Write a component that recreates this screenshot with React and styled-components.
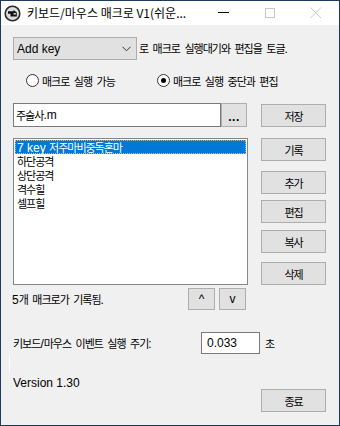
import React from "react";
import styled, { createGlobalStyle } from "styled-components";

const Global = createGlobalStyle`
  html, body { margin: 0; padding: 0; background: #f0f0f0; }
  body { font-family: "Liberation Sans", "Noto Sans CJK KR", sans-serif; font-size: 12px; color: #000; }
  * { box-sizing: border-box; }
`;

const Win = styled.div`
  width: 340px;
  height: 426px;
  border: 1px solid #1b3a5c;
  background: #f0f0f0;
  display: flex;
  flex-direction: column;
  overflow: hidden;
`;

const TitleBar = styled.div`
  height: 24px;
  background: #fff;
  display: flex;
  align-items: center;
  padding-left: 3px;
  flex-shrink: 0;
`;

const TitleText = styled.span`
  font-family: "Noto Sans CJK KR", sans-serif;
  font-size: 12px;
  letter-spacing: 0px;
  margin-left: 6px;
  flex: 1;
  white-space: nowrap;
  line-height: 24px;
`;

const Caption = styled.div`
  width: 46px;
  height: 24px;
  display: flex;
  align-items: center;
  justify-content: center;
`;

const Client = styled.div`
  flex: 1;
  display: flex;
  flex-direction: column;
  padding-left: 12px;
`;

const TopRow = styled.div`
  display: flex;
  align-items: center;
  margin-top: 12px;
  height: 23px;
`;

const Combo = styled.div`
  width: 124px;
  height: 23px;
  border: 1px solid #adadad;
  background: #e1e1e1;
  display: flex;
  align-items: center;
  padding-left: 3px;
  padding-right: 5px;
  justify-content: space-between;
`;

const Label = styled.span`
  margin-left: ${(p) => p.$ml || 0}px;
  white-space: nowrap;
`;

const Ko = styled.span`
  display: inline-block;
  height: 14px;
  line-height: 14px;
  font-family: "Noto Sans CJK KR", sans-serif;
  font-size: 11px;
  letter-spacing: -1px;
  word-spacing: 3px;
  white-space: pre;
`;

const RadioRow = styled.div`
  display: flex;
  align-items: center;
  margin-top: 14px;
  height: 13px;
  padding-left: 13px;
`;

const RadioItem = styled.label`
  display: flex;
  align-items: center;
  gap: 3px;
  width: ${(p) => p.$w}px;
`;

const RadioCircle = styled.span`
  width: 13px;
  height: 13px;
  border-radius: 50%;
  border: 1px solid #333;
  background: #fff;
  position: relative;
  flex-shrink: 0;
  &::after {
    content: "";
    display: ${(p) => (p.$on ? "block" : "none")};
    position: absolute;
    left: 3px;
    top: 3px;
    width: 5px;
    height: 5px;
    border-radius: 50%;
    background: #000;
  }
`;

const Grid = styled.div`
  display: grid;
  grid-template-columns: 235px 65px;
  column-gap: 13px;
  margin-top: ${(p) => p.$mt}px;
`;

const FileGroup = styled.div`
  display: flex;
  height: 24px;
`;

const TextBox = styled.div`
  width: 208px;
  height: 24px;
  background: #fff;
  border: 1px solid #7a7a7a;
  display: flex;
  align-items: center;
  padding-left: 2px;
`;

const Btn = styled.div`
  width: ${(p) => p.$w || 65}px;
  height: ${(p) => p.$h || 23}px;
  margin-top: ${(p) => p.$mt || 0}px;
  background: #e1e1e1;
  border: 1px solid #adadad;
  display: flex;
  align-items: center;
  justify-content: center;
  flex-shrink: 0;
`;

const Dots = styled.span`
  font-weight: bold;
  margin-top: 3px;
  letter-spacing: 0.5px;
`;

const List = styled.div`
  width: 235px;
  height: 147px;
  background: #fff;
  border: 1px solid #828790;
  padding: 1px;
`;

const Item = styled.div`
  height: 14px;
  line-height: 14px;
  padding-left: 2px;
  white-space: nowrap;
  overflow: hidden;
  background: ${(p) => (p.$sel ? "#0078d7" : "transparent")};
  color: ${(p) => (p.$sel ? "#fff" : "#000")};
  outline: ${(p) => (p.$sel ? "1px dotted #f2b46a" : "none")};
  outline-offset: -1px;
`;

const BtnCol = styled.div`
  display: flex;
  flex-direction: column;
`;

const CountRow = styled.div`
  display: flex;
  align-items: center;
  height: 22px;
  margin-top: 3px;
  width: 235px;
`;

const CountText = styled.span`
  flex: 1;
  margin-left: -1px;
`;

const ArrowGroup = styled.div`
  display: flex;
  gap: 4px;
  margin-right: 2px;
`;

const PeriodRow = styled.div`
  display: flex;
  align-items: center;
  margin-top: 22px;
  height: 22px;
`;

const PeriodLabel = styled.span`
  width: 188px;
`;

const NumBox = styled.div`
  width: 59px;
  height: 22px;
  background: #fff;
  border: 1px solid #7a7a7a;
  display: flex;
  align-items: center;
  padding-left: 5px;
  margin-right: 5px;
`;

const Stub = styled.div`
  width: 1px;
  height: 18px;
  margin-top: 1px;
  margin-left: -4px;
  background: #fff;
`;

const BottomRow = styled.div`
  display: flex;
  justify-content: space-between;
  align-items: flex-start;
  width: 313px;
`;

const Version = styled.span`
  margin-top: 3px;
  line-height: 14px;
`;

const HANGUL = /([\uAC00-\uD7A3]+(?:\s+[\uAC00-\uD7A3]+)*)/;
const T = ({ children }) =>
  String(children)
    .split(HANGUL)
    .map((p, i) => (i % 2 ? <Ko key={i}>{p}</Ko> : p));

const AppIcon = () => (
  <svg width="17" height="17" viewBox="0 0 17 17">
    <circle cx="8.5" cy="8.5" r="7.3" fill="#dcdcdc" stroke="#2a2a2a" strokeWidth="1.6" />
    <path d="M4 6.2 L9.5 6.2 L9.5 5 L12.8 7.6 L12.8 11.4 L6.5 11.4 L6.5 8.8 L4 8.8 Z" fill="#111" />
    <rect x="9.6" y="8" width="2.2" height="1.6" fill="#dcdcdc" />
  </svg>
);

const Chevron = () => (
  <svg width="9" height="6" viewBox="0 0 9 6">
    <path d="M0.5 0.8 L4.5 4.8 L8.5 0.8" fill="none" stroke="#333" strokeWidth="1" />
  </svg>
);

const items = ["7 key 저주마비중독혼마", "하단공격", "상단공격", "격수힐", "셀프힐"];

export default function App() {
  return (
    <>
      <Global />
      <Win>
        <TitleBar>
          <AppIcon />
          <TitleText>키보드/마우스 매크로 V1(쉬운...</TitleText>
          <Caption>
            <svg width="12" height="2" viewBox="0 0 12 2"><rect width="11" height="1" fill="#000" /></svg>
          </Caption>
          <Caption>
            <svg width="11" height="11" viewBox="0 0 11 11"><rect x="0.5" y="0.5" width="9" height="9" fill="none" stroke="#c8c8c8" /></svg>
          </Caption>
          <Caption>
            <svg width="12" height="12" viewBox="0 0 12 12"><path d="M0.5 0.5 L11 11 M11 0.5 L0.5 11" stroke="#c8c8c8" strokeWidth="1" /></svg>
          </Caption>
        </TitleBar>
        <Client>
          <TopRow>
            <Combo>
              <span>Add key</span>
              <Chevron />
            </Combo>
            <Label $ml={2}><T>로 매크로 실행대기와 편집을 토글.</T></Label>
          </TopRow>
          <RadioRow>
            <RadioItem $w={131}>
              <RadioCircle />
              <T>매크로 실행 가능</T>
            </RadioItem>
            <RadioItem $w={170}>
              <RadioCircle $on />
              <T>매크로 실행 중단과 편집</T>
            </RadioItem>
          </RadioRow>
          <Grid $mt={16}>
            <FileGroup>
              <TextBox><T>주술사.m</T></TextBox>
              <Btn $w={26} $h={24}><Dots>...</Dots></Btn>
            </FileGroup>
            <Btn $mt={1}><T>저장</T></Btn>
          </Grid>
          <Grid $mt={11}>
            <div>
              <List>
                {items.map((it, i) => (
                  <Item key={it} $sel={i === 0}><T>{it}</T></Item>
                ))}
              </List>
              <CountRow>
                <CountText><T>5개 매크로가 기록됨.</T></CountText>
                <ArrowGroup>
                  <Btn $w={27} $h={22}>^</Btn>
                  <Btn $w={27} $h={22}>v</Btn>
                </ArrowGroup>
              </CountRow>
            </div>
            <BtnCol>
              <Btn><T>기록</T></Btn>
              <Btn $mt={10}><T>추가</T></Btn>
              <Btn $mt={6}><T>편집</T></Btn>
              <Btn $mt={7}><T>복사</T></Btn>
              <Btn $mt={9}><T>삭제</T></Btn>
            </BtnCol>
          </Grid>
          <PeriodRow>
            <PeriodLabel><T>키보드/마우스 이벤트 실행 주기:</T></PeriodLabel>
            <NumBox>0.033</NumBox>
            <T>초</T>
          </PeriodRow>
          <Stub />
          <BottomRow>
            <Version>Version 1.30</Version>
            <Btn $mt={16}><T>종료</T></Btn>
          </BottomRow>
        </Client>
      </Win>
    </>
  );
}
